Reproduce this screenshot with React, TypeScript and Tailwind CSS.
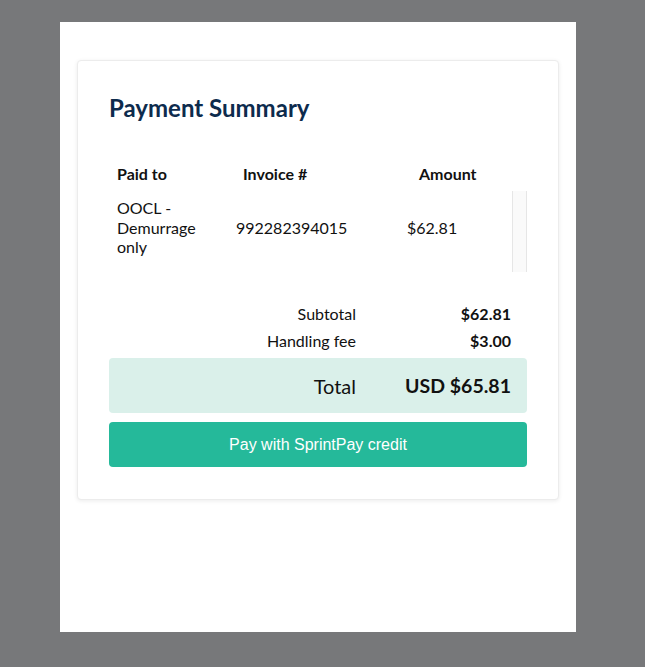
import React from "react";

const rows = [{ paidTo: "OOCL - Demurrage only", invoice: "992282394015", amount: "$62.81" }];

const App: React.FC = () => {
  return (
    <div className="min-h-[667px] w-full bg-[#77787a] pt-[22px] pl-[60px] font-['Lato',sans-serif] text-[#111]">
      <div className="w-[516px] h-[610px] bg-white pt-[38px] pl-[17px]">
        <div className="w-[482px] h-[440px] rounded-[4px] border border-[#ececec] bg-white px-[31px] pt-[31px] shadow-[0_1px_4px_rgba(0,0,0,0.08)]">
          <h2 className="text-[24px] leading-[32px] font-bold text-[#0d2b4d]">
            Payment Summary
          </h2>

          {/* table header */}
          <div className="mt-[33px] flex h-[33px] items-center text-[16px] font-bold">
            <div className="w-[126px] pl-2">Paid to</div>
            <div className="w-[176px] pl-2">Invoice #</div>
            <div className="pl-2">Amount</div>
          </div>

          {/* scrolling body */}
          <div className="mt-[1px] flex h-[81px]">
            <div className="flex-1">
              {rows.map((r) => (
                <div key={r.invoice} className="flex items-center pt-[7px] text-[16px] leading-[19.5px]">
                  <div className="w-[119px] pl-2 pr-2">{r.paidTo}</div>
                  <div className="w-[171px] pl-2">{r.invoice}</div>
                  <div className="pl-2">{r.amount}</div>
                </div>
              ))}
            </div>
            <div className="w-[15px] border-x border-[#e6e6e6] bg-[#fafafa]" />
          </div>

          {/* totals */}
          <div className="mt-[32px] grid grid-cols-[247px_155px] gap-y-[7px] text-[16px] leading-[20px]">
            <div className="text-right">Subtotal</div>
            <div className="text-right font-bold">$62.81</div>
            <div className="text-right">Handling fee</div>
            <div className="text-right font-bold">$3.00</div>
          </div>

          <div className="mt-[7px] grid h-[55px] grid-cols-[247px_155px] items-center rounded-[4px] bg-[#daf0ea] text-[20px]">
            <div className="text-right">Total</div>
            <div className="text-right text-[19.5px] font-bold">USD $65.81</div>
          </div>

          <button className="mt-[9px] h-[45px] w-full rounded-[4px] bg-[#25b99a] font-['Liberation_Sans',Arial,sans-serif] text-[16px] text-white">
            Pay with SprintPay credit
          </button>
        </div>
      </div>
    </div>
  );
};

export default App;
